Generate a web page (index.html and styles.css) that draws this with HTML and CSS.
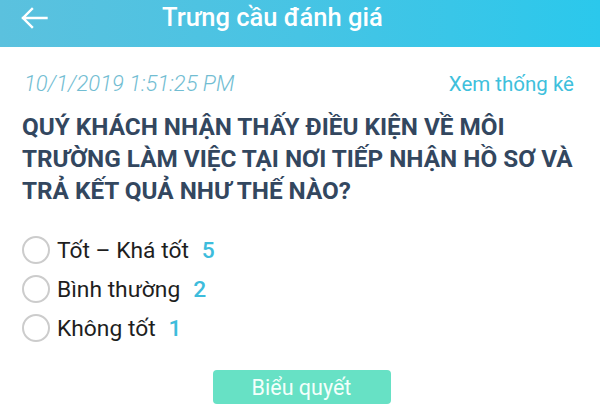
FILE: index.html
```html
<!DOCTYPE html>
<html lang="vi">
<head>
<meta charset="utf-8">
<link rel="stylesheet" href="styles.css">
</head>
<body>
<div class="app">
  <header class="topbar">
    <span class="back">
      <svg width="28" height="22" viewBox="0 0 28 22"><path d="M26.5 11H3M12 2L3 11l9 9" fill="none" stroke="#fff" stroke-width="2.4" stroke-linecap="square"/></svg>
    </span>
    <h1 class="title">Trưng cầu đánh giá</h1>
  </header>
  <main class="content">
    <div class="meta">
      <span class="date">10/1/2019 1:51:25 PM</span>
      <span class="stats">Xem thống kê</span>
    </div>
    <p class="question">QUÝ KHÁCH NHẬN THẤY ĐIỀU KIỆN VỀ MÔI TRƯỜNG LÀM VIỆC TẠI NƠI TIẾP NHẬN HỒ SƠ VÀ TRẢ KẾT QUẢ NHƯ THẾ NÀO?</p>
    <ul class="options">
      <li class="option"><span class="radio"></span><span class="label">Tốt – Khá tốt</span><span class="count">5</span></li>
      <li class="option"><span class="radio"></span><span class="label">Bình thường</span><span class="count">2</span></li>
      <li class="option"><span class="radio"></span><span class="label">Không tốt</span><span class="count">1</span></li>
    </ul>
    <div class="actions"><button class="vote">Biểu quyết</button></div>
  </main>
</div>
</body>
</html>
```
FILE: styles.css
```css
* { box-sizing: border-box; }
html, body { margin: 0; padding: 0; background: #fff; }
body { font-family: Roboto, "Noto Sans", sans-serif; width: 600px; height: 418px; overflow: hidden; }
.topbar {
  height: 47px;
  background: linear-gradient(90deg, #5bc1de 0%, #47c4e4 50%, #2bc8ec 100%);
  display: flex;
  align-items: flex-start;
  padding-top: 7px;
}
.back { width: 28px; height: 22px; margin-left: 20px; display: flex; }
.title {
  margin: -7px 0 0 114px;
  color: #fff;
  font-size: 25.5px;
  font-weight: 500;
  line-height: 34px;
}
.content { padding: 25px 26px 0 22px; }
.meta { display: flex; justify-content: space-between; align-items: baseline; padding-left: 2px; height: 24px; line-height: 24px; }
.date { font-style: italic; color: #72bdd2; font-size: 22px; font-weight: 300; }
.stats { color: #3ec0dc; font-size: 20.5px; }
.question {
  margin: 15px 0 0 0;
  color: #33475f;
  font-weight: 700;
  font-size: 24.3px;
  line-height: 32px;
}
.options { list-style: none; margin: 29px 0 0 0; padding: 0; display: flex; flex-direction: column; gap: 11px; }
.option { display: flex; align-items: center; height: 28px; font-size: 22.8px; color: #1e1e1e; }
.radio { flex: none; width: 28px; height: 28px; border: 2.5px solid #cccccc; border-radius: 50%; margin-right: 7px; }
.count { color: #3dbcdc; font-weight: 500; margin-left: 13px; }
.actions { display: flex; justify-content: center; margin-top: 28px; }
.vote {
  width: 178px; height: 34px;
  margin-left: 7px;
  border: none; border-radius: 4px;
  background: #67e1c5; color: #f4fffb;
  font-family: Roboto, sans-serif; font-size: 21.5px;
}
```
